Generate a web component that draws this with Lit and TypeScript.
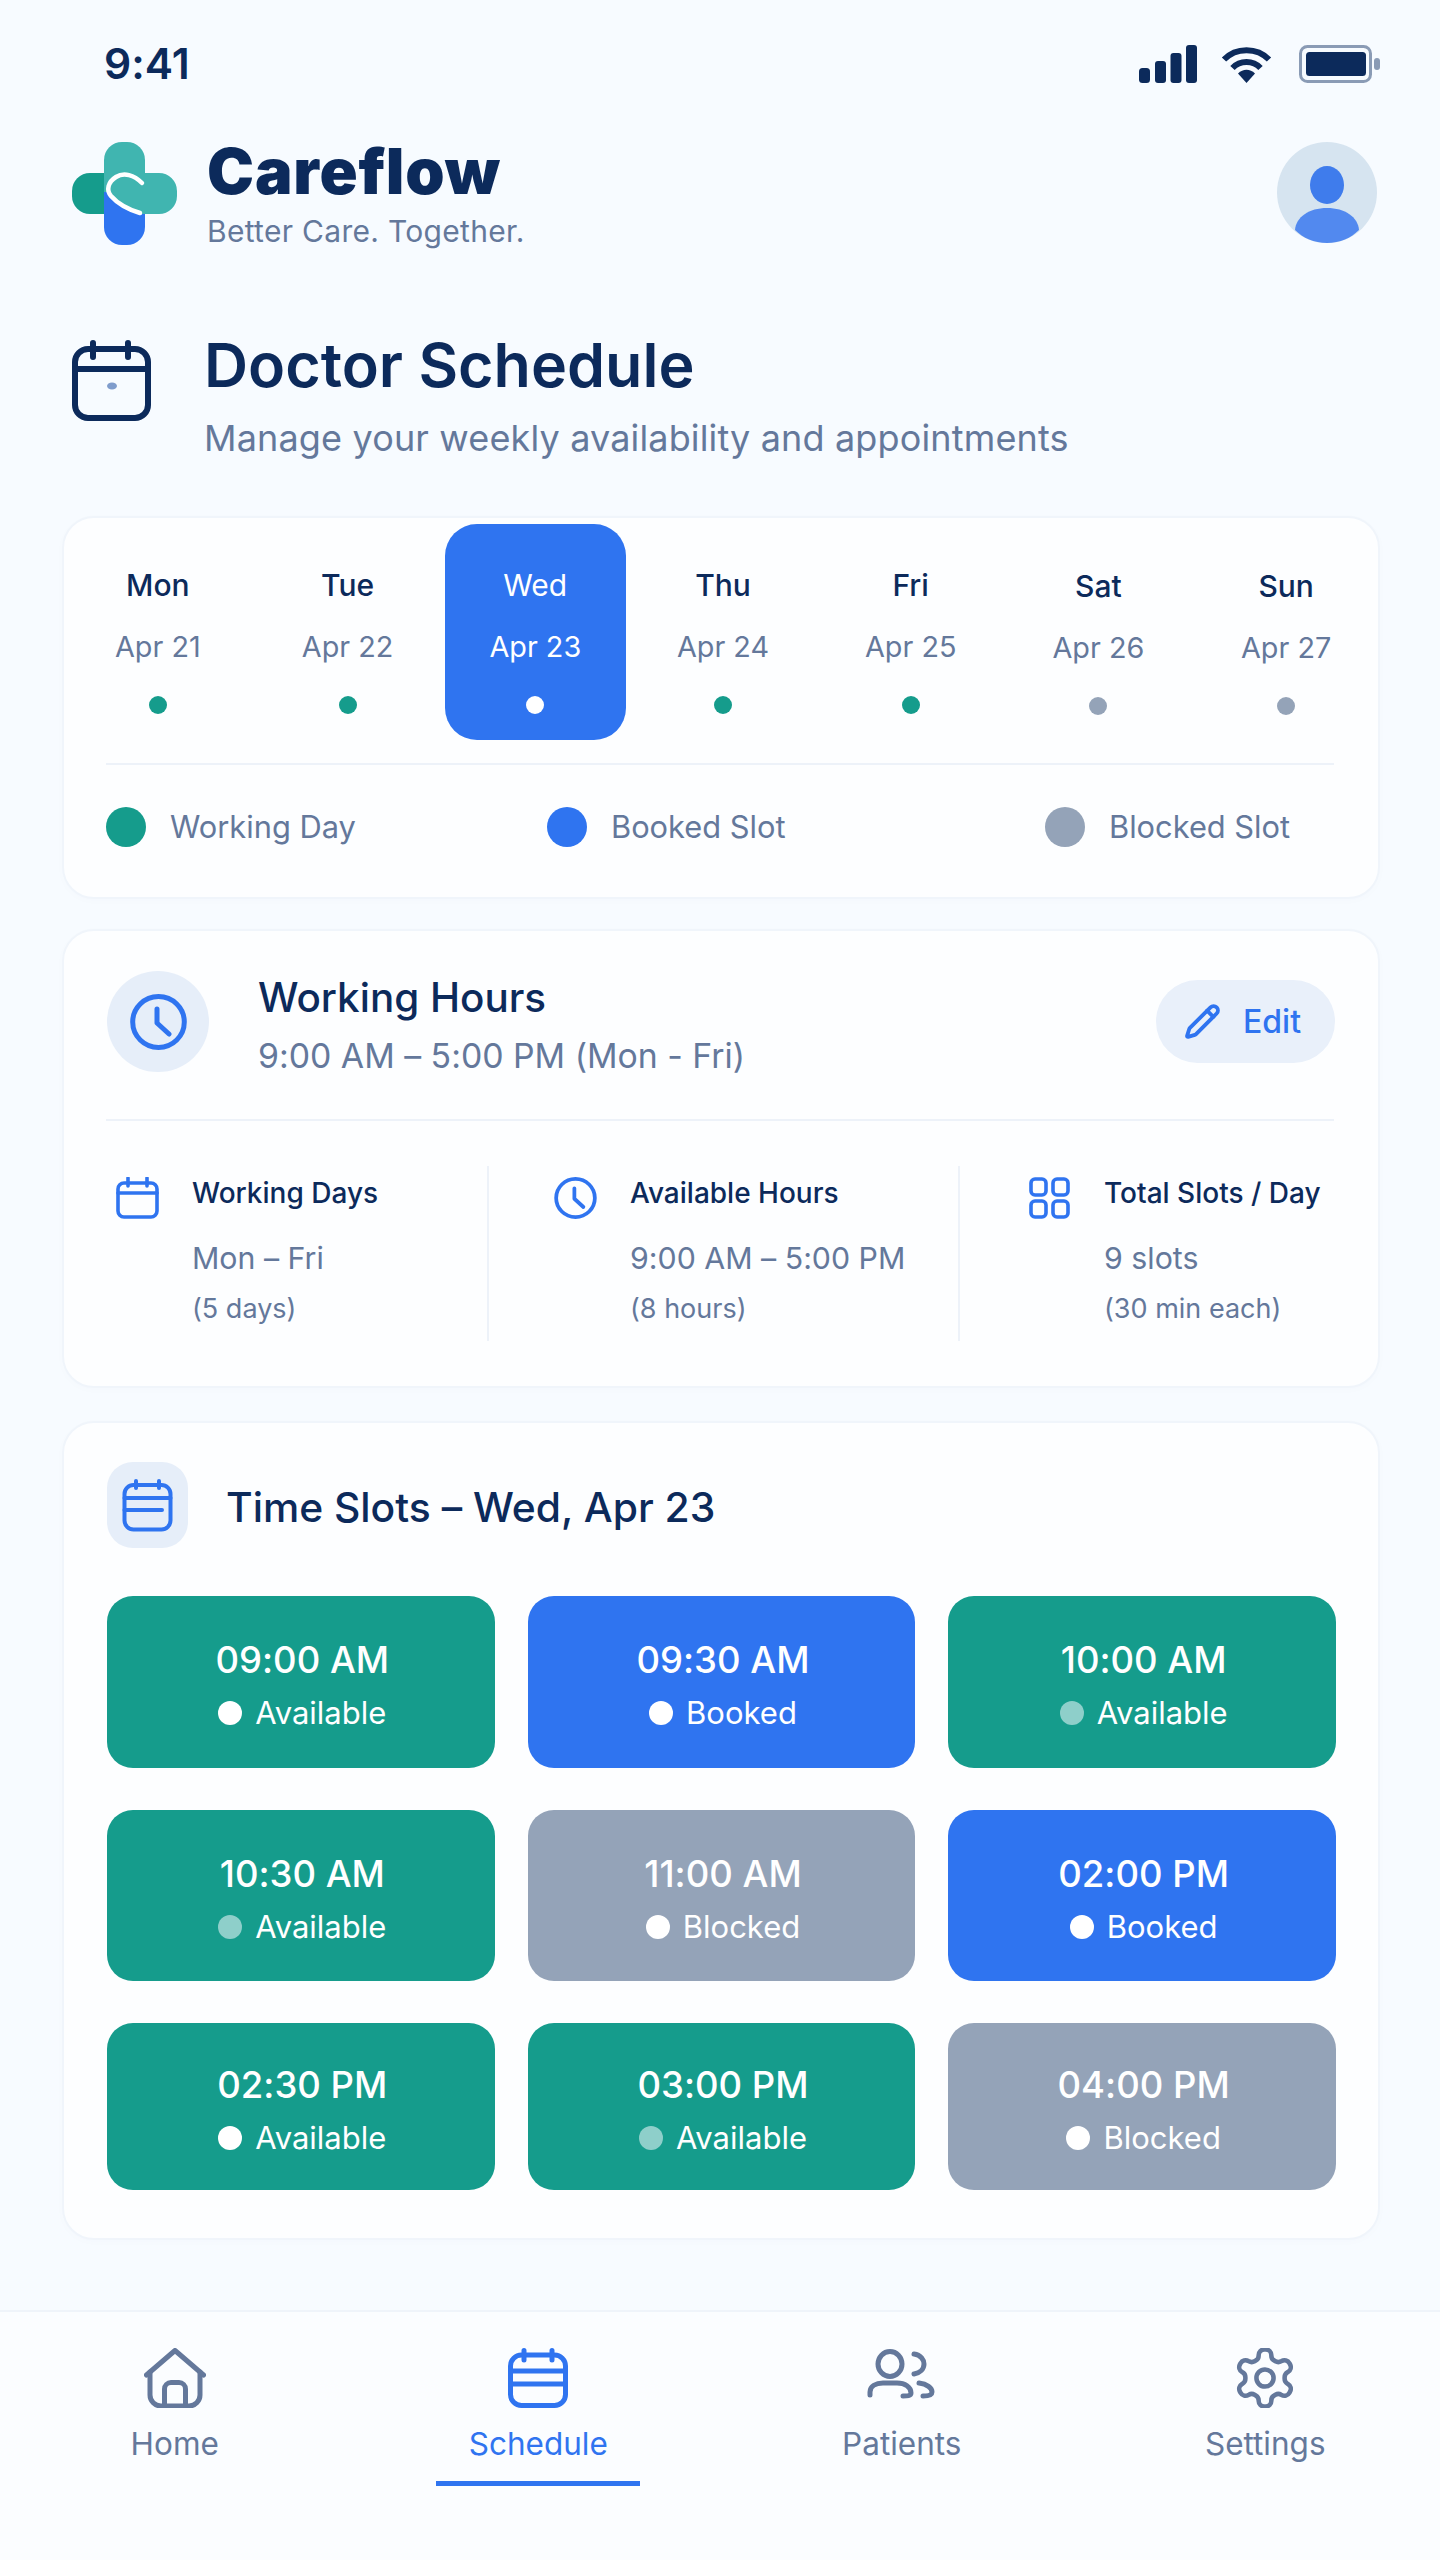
import { LitElement, html, css } from "lit";
import { customElement } from "lit/decorators.js";

const days = [
  { d: "Mon", a: "Apr 21", k: "w" }, { d: "Tue", a: "Apr 22", k: "w" }, { d: "Wed", a: "Apr 23", k: "on" },
  { d: "Thu", a: "Apr 24", k: "w" }, { d: "Fri", a: "Apr 25", k: "w" }, { d: "Sat", a: "Apr 26", k: "b" }, { d: "Sun", a: "Apr 27", k: "b" },
];
const slots = [
  { t: "09:00 AM", s: "Available", k: "teal" }, { t: "09:30 AM", s: "Booked", k: "blue" }, { t: "10:00 AM", s: "Available", k: "teal", dim: true },
  { t: "10:30 AM", s: "Available", k: "teal", dim: true }, { t: "11:00 AM", s: "Blocked", k: "gray" }, { t: "02:00 PM", s: "Booked", k: "blue" },
  { t: "02:30 PM", s: "Available", k: "teal" }, { t: "03:00 PM", s: "Available", k: "teal", dim: true }, { t: "04:00 PM", s: "Blocked", k: "gray" },
];

const calSmall = (cls: string) => html`<svg class=${cls} viewBox="0 0 43 42" fill="none" stroke="#2f74f0" stroke-width="3.6" stroke-linecap="round">
  <rect x="2" y="6" width="39" height="34" rx="6"/><path d="M2 16H41"/><path d="M12 1V9M31 1V9"/></svg>`;
const clock = (cls: string, sw: number) => html`<svg class=${cls} viewBox="0 0 57 56" fill="none" stroke="#2f74f0" stroke-width=${sw} stroke-linecap="round" stroke-linejoin="round">
  <ellipse cx="28.5" cy="28" rx="25.8" ry="25.4"/><path d="M27 15V29L39 40"/></svg>`;
const calLines = (cls: string, sw: number) => html`<svg class=${cls} viewBox="0 0 51 53" fill="none" stroke="#2f74f0" stroke-width=${sw} stroke-linecap="round">
  <rect x="2.5" y="6" width="46" height="44.5" rx="9"/><path d="M2.5 19H48.5M2.5 31H40"/><path d="M14 2V9M37 2V9"/></svg>`;

@customElement("app-root")
export class AppRoot extends LitElement {
  static styles = css`
    :host { display: block; width: 1440px; height: 2560px; background: #f7fbff; color: #0c2a5b; font-family: Inter, "Liberation Sans", sans-serif; font-feature-settings: "calt" 0; overflow: hidden; }
    .screen { height: 2560px; display: flex; flex-direction: column; }
    svg { display: block; flex: none; }
    .status { display: flex; justify-content: space-between; align-items: center; height: 38px; margin-top: 45px; padding: 0 60px 0 104px; }
    .time { font-size: 42.5px; font-weight: 600; line-height: 38px; }
    .sys { display: flex; align-items: center; }
    .sig { width: 58px; height: 38px; margin-right: 24px; }
    .wifi { width: 51px; height: 38px; margin-right: 27px; }
    .bat { width: 81px; height: 38px; }
    .brand { display: flex; margin-top: 59px; padding: 0 63px 0 72px; }
    .logo { width: 105px; height: 103px; margin-right: 30px; }
    .brandtxt { flex: 1; padding-top: 4px; }
    .bname { font-size: 63px; line-height: 50px; font-weight: 900; letter-spacing: 0.8px; }
    .btag { font-size: 30px; line-height: 30px; margin-top: 20px; color: #64789b; letter-spacing: 0.3px; }
    .avatar { width: 100px; height: 101px; }
    .head { display: flex; margin-top: 94px; padding-left: 72px; }
    .bigcal { width: 79px; height: 81px; margin-right: 53px; }
    .htxt { padding-top: 3px; }
    .htitle { font-size: 61px; line-height: 44px; font-weight: 600; }
    .hsub { font-size: 36px; line-height: 36px; margin-top: 33px; color: #64789b; letter-spacing: 0.15px; }
    .card { box-sizing: border-box; margin-left: 62px; width: 1318px; background: #fdfeff; border: 2px solid #f0f5fb; border-radius: 32px; box-shadow: 0 2px 8px rgba(20, 60, 120, 0.015); }
    .c1 { height: 383px; margin-top: 60px; padding-top: 6px; }
    .week { display: grid; grid-template-columns: repeat(7, 1fr); margin: 0 -2px 0 2px; }
    .day { justify-self: center; width: 181px; height: 216px; box-sizing: border-box; padding-top: 44px; border-radius: 32px; display: flex; flex-direction: column; align-items: center; }
    .day:first-child { margin-right: 4px; }
    .day.b { padding-top: 45px; }
    .day.on { background: #2f74f0; color: #fff; }
    .dn { font-size: 30px; line-height: 34px; font-weight: 500; }
    .da { font-size: 28.8px; line-height: 34px; margin-top: 28px; color: #64789b; }
    .day.on .dn { font-weight: 400; }
    .day.on .da { color: #fff; }
    .dot { width: 18px; height: 18px; border-radius: 50%; margin-top: 32px; }
    .dot.w { background: #159c8c; } .dot.on { background: #fff; } .dot.b { background: #94a3b8; }
    .rule { height: 2px; background: #edf2f9; margin: 0 44px 0 42px; }
    .c1 .rule { margin-top: 23px; }
    .legend { display: grid; grid-template-columns: 441px 498px auto; margin: 42px 42px 0; }
    .li { display: flex; align-items: center; gap: 24px; font-size: 30.8px; line-height: 40px; color: #64789b; }
    .ld { width: 40px; height: 40px; border-radius: 50%; }
    .ld.teal { background: #159c8c; } .ld.blue { background: #2f74f0; } .ld.gray { background: #94a3b8; }
    .c2 { height: 459px; margin-top: 30px; padding-top: 40px; }
    .wh { display: flex; align-items: flex-start; padding: 0 43px; height: 101px; }
    .cir { width: 102px; height: 101px; border-radius: 50%; background: #e6eef9; display: flex; align-items: center; justify-content: center; margin-right: 49px; }
    .clk { width: 57px; height: 56px; }
    .wt { flex: 1; padding-top: 7px; }
    .wtt { font-size: 40.4px; line-height: 40px; font-weight: 550; }
    .wts { font-size: 33.8px; line-height: 36px; margin-top: 20px; color: #64789b; }
    .edit { margin-top: 9px; width: 179px; height: 83px; border-radius: 42px; background: #e9f0fa; display: flex; align-items: center; justify-content: center; gap: 22px; color: #2f74f0; font-size: 32px; font-weight: 500; }
    .edit span { margin-right: 2px; }
    .pen { width: 37px; height: 37px; margin-left: -4px; }
    .c2 .rule { margin-top: 47px; }
    .stats { display: grid; grid-template-columns: 381px 471px 1fr; margin: 45px 42px 0; height: 175px; }
    .st { display: flex; box-sizing: border-box; }
    .st + .st { border-left: 2px solid #edf2f9; }
    .st:nth-child(1) { padding-left: 10px; }
    .st:nth-child(2) { padding-left: 65px; }
    .st:nth-child(3) { padding-left: 68px; }
    .sico { width: 43px; height: 42px; margin: 11px 33px 0 0; }
    .stx { padding-top: 10px; white-space: nowrap; }
    .sl { font-size: 28px; line-height: 34px; font-weight: 500; }
    .sv { font-size: 30.3px; line-height: 36px; margin-top: 30px; color: #64789b; }
    .sn { font-size: 27px; line-height: 32px; margin-top: 17px; color: #64789b; }
    .c3 { height: 819px; margin-top: 33px; padding: 39px 42px 0 43px; }
    .tsh { display: flex; align-items: center; height: 86px; }
    .tile { width: 81px; height: 86px; border-radius: 26px; background: #e6eef9; display: flex; align-items: center; justify-content: center; margin-right: 38px; }
    .tc { width: 51px; height: 53px; }
    .tst { font-size: 40.8px; font-weight: 550; line-height: 40px; padding-top: 3px; }
    .grid { display: grid; grid-template-columns: repeat(3, 1fr); grid-template-rows: 172px 171px 167px; column-gap: 33px; row-gap: 42px; margin-top: 48px; }
    .slot { border-radius: 26px; color: #fff; display: flex; flex-direction: column; align-items: center; justify-content: center; padding: 6px 0 0 3px; box-sizing: border-box; }
    .slot.teal { background: #159c8c; } .slot.blue { background: #2f74f0; } .slot.gray { background: #94a3b8; }
    .slt { font-size: 36.5px; line-height: 40px; font-weight: 500; }
    .sls { display: flex; align-items: center; gap: 13px; margin-top: 16px; font-size: 31px; line-height: 34px; }
    .sd { width: 24px; height: 24px; border-radius: 50%; background: #fff; }
    .sd.dim { background: #8ecfca; }
    .nav { flex: 1; margin-top: 70px; background: #fbfdff; border-top: 2px solid #eff4fa; display: grid; grid-template-columns: repeat(4, 1fr); column-gap: 64px; padding: 36px 25px 0; }
    .ni { display: flex; flex-direction: column; align-items: center; color: #64789b; font-size: 31.5px; line-height: 36px; }
    .ni svg { height: 60px; }
    .nl { margin-top: 18px; }
    .ni.on { color: #2f74f0; }
    .bar { width: 204px; height: 5px; background: #2f74f0; margin-top: 19px; }
  `;

  render() {
    return html`<div class="screen">
      <div class="status">
        <div class="time">9:41</div>
        <div class="sys">
          <svg class="sig" viewBox="0 0 58 38" fill="#0c2a5b"><rect x="0" y="23" width="11" height="15" rx="3.5"/><rect x="16" y="16" width="11" height="22" rx="3"/><rect x="31.5" y="8" width="11" height="30" rx="3"/><rect x="47" y="0" width="11" height="38" rx="3"/></svg>
          <svg class="wifi" viewBox="0 0 51 38" fill="none" stroke="#0c2a5b" stroke-width="6"><path d="M3 14.5C15 2 36 2 48 14.5"/><path d="M11.5 23C19 15 32 15 39.5 23"/><path d="M17 28.5C22 23.6 29 23.6 34 28.5L25.5 38Z" fill="#0c2a5b" stroke="none"/></svg>
          <svg class="bat" viewBox="0 0 81 38"><rect x="1.5" y="1.5" width="70" height="35" rx="7" fill="none" stroke="#8a9bb5" stroke-width="3"/><rect x="7" y="7" width="60" height="24" rx="3.5" fill="#0c2a5b"/><rect x="75" y="13" width="6" height="12" rx="3" fill="#8a9bb5"/></svg>
        </div>
      </div>

      <div class="brand">
        <svg class="logo" viewBox="0 0 105 103">
          <path d="M40 31H18A18 18 0 0 0 0 49V54A18 18 0 0 0 18 72H40Z" fill="#159c8c"/>
          <path d="M32 40H73V85A18 18 0 0 1 55 103H50A18 18 0 0 1 32 85Z" fill="#2f74f0"/>
          <path d="M32 50V18A18 18 0 0 1 50 0H55A18 18 0 0 1 73 18V50Z" fill="#40b5b0"/>
          <path d="M36 31H87A18 18 0 0 1 105 49V54A18 18 0 0 1 87 72H68C55 65 38 56 36 46Z" fill="#40b5b0"/>
          <path d="M70 41C62 33 52 30 44 35C36 40 34 48 39 54C46 62 58 68 68 71" fill="none" stroke="#fff" stroke-width="4.5" stroke-linecap="round"/>
        </svg>
        <div class="brandtxt"><div class="bname">Careflow</div><div class="btag">Better Care. Together.</div></div>
        <svg class="avatar" viewBox="0 0 100 101">
          <ellipse cx="50" cy="50.5" rx="50" ry="50.5" fill="#d6e4f0"/>
          <ellipse cx="50" cy="43" rx="17" ry="19" fill="#3f7cec"/>
          <path d="M18 88C19 75 32 66 50 66C68 66 81 75 82 88C74 96 63 101 50 101C37 101 26 96 18 88Z" fill="#5289ef"/>
        </svg>
      </div>

      <div class="head">
        <svg class="bigcal" viewBox="0 0 79 81" fill="none" stroke="#0c2a5b" stroke-width="6" stroke-linecap="round">
          <rect x="3" y="9" width="73" height="69" rx="13"/><path d="M3 29H76"/><path d="M21 3V17M56 3V17"/>
          <ellipse cx="40" cy="46" rx="5" ry="3.5" fill="#7f9ccc" stroke="none"/>
        </svg>
        <div class="htxt"><div class="htitle">Doctor Schedule</div><div class="hsub">Manage your weekly availability and appointments</div></div>
      </div>

      <section class="card c1">
        <div class="week">${days.map((x) => html`<div class="day ${x.k === "on" ? "on" : x.k}"><div class="dn">${x.d}</div><div class="da">${x.a}</div><div class="dot ${x.k}"></div></div>`)}</div>
        <div class="rule"></div>
        <div class="legend">
          <div class="li"><span class="ld teal"></span>Working Day</div>
          <div class="li"><span class="ld blue"></span>Booked Slot</div>
          <div class="li"><span class="ld gray"></span>Blocked Slot</div>
        </div>
      </section>

      <section class="card c2">
        <div class="wh">
          <div class="cir">${clock("clk", 5)}</div>
          <div class="wt"><div class="wtt">Working Hours</div><div class="wts">9:00 AM – 5:00 PM (Mon - Fri)</div></div>
          <div class="edit">
            <svg class="pen" viewBox="0 0 24 24" fill="none" stroke="#2f74f0" stroke-width="2.5" stroke-linecap="round" stroke-linejoin="round"><path d="M21.174 6.812a1 1 0 0 0-3.986-3.987L3.842 16.174a2 2 0 0 0-.5.83l-1.321 4.352a.5.5 0 0 0 .623.622l4.353-1.32a2 2 0 0 0 .83-.497z"/><path d="m15 5 4 4"/></svg>
            <span>Edit</span>
          </div>
        </div>
        <div class="rule"></div>
        <div class="stats">
          <div class="st">${calSmall("sico")}<div class="stx"><div class="sl">Working Days</div><div class="sv">Mon – Fri</div><div class="sn">(5 days)</div></div></div>
          <div class="st">${clock("sico", 5)}<div class="stx"><div class="sl">Available Hours</div><div class="sv">9:00 AM – 5:00 PM</div><div class="sn">(8 hours)</div></div></div>
          <div class="st">
            <svg class="sico" viewBox="0 0 41 42" fill="none" stroke="#2f74f0" stroke-width="3.6"><rect x="2" y="2" width="15" height="16" rx="4"/><rect x="24" y="2" width="15" height="16" rx="4"/><rect x="2" y="24" width="15" height="16" rx="4"/><rect x="24" y="24" width="15" height="16" rx="4"/></svg>
            <div class="stx"><div class="sl">Total Slots / Day</div><div class="sv">9 slots</div><div class="sn">(30 min each)</div></div>
          </div>
        </div>
      </section>

      <section class="card c3">
        <div class="tsh"><div class="tile">${calLines("tc", 4)}</div><div class="tst">Time Slots – Wed, Apr 23</div></div>
        <div class="grid">${slots.map((s) => html`<div class="slot ${s.k}"><div class="slt">${s.t}</div><div class="sls"><span class="sd ${s.dim ? "dim" : ""}"></span>${s.s}</div></div>`)}</div>
      </section>

      <nav class="nav">
        <div class="ni">
          <svg style="width:62px" viewBox="0 0 62 60" fill="none" stroke="#64789b" stroke-width="5" stroke-linecap="round" stroke-linejoin="round"><path d="M2.5 27L31 2.5L59.5 27"/><path d="M6 24V47A11 11 0 0 0 17 58H45A11 11 0 0 0 56 47V24"/><path d="M20.5 58V41A6.5 6.5 0 0 1 27 34.5H35A6.5 6.5 0 0 1 41.5 41V58"/></svg>
          <div class="nl">Home</div>
        </div>
        <div class="ni on">
          <svg style="width:60px" viewBox="0 0 60 60" fill="none" stroke="#2f74f0" stroke-width="5" stroke-linecap="round"><rect x="2.5" y="7" width="55" height="50.5" rx="11"/><path d="M2.5 23H57.5M2.5 36H57.5"/><path d="M16 2.5V12M44 2.5V12"/></svg>
          <div class="nl">Schedule</div>
          <div class="bar"></div>
        </div>
        <div class="ni">
          <svg style="width:70px" viewBox="0 0 70 60" fill="none" stroke="#64789b" stroke-width="5" stroke-linecap="round"><ellipse cx="23" cy="16" rx="12" ry="12.5"/><path d="M3 47V44C3 38 9 35 16 35H30C38 35 44 39 44 45C44 48 40 48 36 48"/><path d="M47 6C54 7 57 12 57 16C57 21 53 25 47 26"/><path d="M52 35C60 36 65 40 65 44C65 47 62 48 56 48"/></svg>
          <div class="nl">Patients</div>
        </div>
        <div class="ni">
          <svg style="width:60px" viewBox="2.6 1.5 18.8 21" fill="none" stroke="#64789b" stroke-width="1.6" stroke-linecap="round" stroke-linejoin="round"><path d="M12.22 2h-.44a2 2 0 0 0-2 2v.18a2 2 0 0 1-1 1.73l-.43.25a2 2 0 0 1-2 0l-.15-.08a2 2 0 0 0-2.73.73l-.22.38a2 2 0 0 0 .73 2.73l.15.1a2 2 0 0 1 1 1.72v.51a2 2 0 0 1-1 1.74l-.15.09a2 2 0 0 0-.73 2.73l.22.38a2 2 0 0 0 2.73.73l.15-.08a2 2 0 0 1 2 0l.43.25a2 2 0 0 1 1 1.73V20a2 2 0 0 0 2 2h.44a2 2 0 0 0 2-2v-.18a2 2 0 0 1 1-1.73l.43-.25a2 2 0 0 1 2 0l.15.08a2 2 0 0 0 2.73-.73l.22-.39a2 2 0 0 0-.73-2.73l-.15-.08a2 2 0 0 1-1-1.74v-.5a2 2 0 0 1 1-1.74l.15-.09a2 2 0 0 0 .73-2.73l-.22-.38a2 2 0 0 0-2.73-.73l-.15.08a2 2 0 0 1-2 0l-.43-.25a2 2 0 0 1-1-1.73V4a2 2 0 0 0-2-2z"/><circle cx="12" cy="12" r="3"/></svg>
          <div class="nl">Settings</div>
        </div>
      </nav>
    </div>`;
  }
}
